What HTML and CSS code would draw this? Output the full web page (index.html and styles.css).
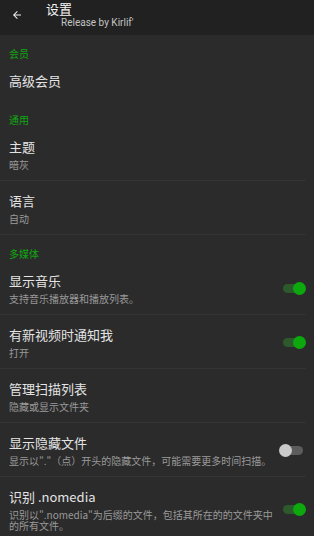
FILE: index.html
```html
<!DOCTYPE html>
<html lang="zh">
<head>
  <meta charset="UTF-8" />
  <meta name="viewport" content="width=device-width, initial-scale=1" />
  <title>设置</title>
  <link rel="stylesheet" href="styles.css">
</head>
<body>
  <div class="appbar">
    <div class="back">
      <svg width="12" height="12" viewBox="0 0 24 24"><path d="M20 11H7.83l5.59-5.59L12 4l-8 8 8 8 1.41-1.41L7.83 13H20v-2z" fill="#f2f2f2"/></svg>
    </div>
    <div class="titles">
      <div class="title">设置</div>
      <div class="subtitle">Release by Kirlif'</div>
    </div>
  </div>

  <div class="section">会员</div>
  <div class="row single">
    <div class="text"><div class="label">高级会员</div></div>
  </div>

  <div class="section">通用</div>
  <div class="row line">
    <div class="text">
      <div class="label">主题</div>
      <div class="sub">暗灰</div>
    </div>
  </div>
  <div class="row line">
    <div class="text">
      <div class="label">语言</div>
      <div class="sub">自动</div>
    </div>
  </div>

  <div class="section">多媒体</div>
  <div class="row line">
    <div class="text">
      <div class="label">显示音乐</div>
      <div class="sub">支持音乐播放器和播放列表。</div>
    </div>
    <div class="toggle on"></div>
  </div>
  <div class="row line">
    <div class="text">
      <div class="label">有新视频时通知我</div>
      <div class="sub">打开</div>
    </div>
    <div class="toggle on"></div>
  </div>
  <div class="row line">
    <div class="text">
      <div class="label">管理扫描列表</div>
      <div class="sub">隐藏或显示文件夹</div>
    </div>
  </div>
  <div class="row line">
    <div class="text">
      <div class="label">显示隐藏文件</div>
      <div class="sub">显示以"."（点）开头的隐藏文件，可能需要更多时间扫描。</div>
    </div>
    <div class="toggle"></div>
  </div>
  <div class="row">
    <div class="text">
      <div class="label">识别 .nomedia</div>
      <div class="sub">识别以".nomedia"为后缀的文件，包括其所在的的文件夹中的所有文件。</div>
    </div>
    <div class="toggle on"></div>
  </div>
</body>
</html>
```

FILE: styles.css
```css
body {
  margin: 0;
  background: #2b2b2b;
  font-family: "Noto Sans CJK SC", Roboto, sans-serif;
  color: #e6e6e6;
  overflow: hidden;
}
.appbar {
  height: 35px;
  background: #212121;
  display: flex;
  box-sizing: border-box;
  padding-top: 1px;
}
.back {
  width: 46px;
  display: flex;
  justify-content: center;
  padding-top: 8px;
  padding-right: 12px;
  box-sizing: border-box;
}
.title {
  font-size: 13px;
  line-height: 16px;
  color: #f4f4f4;
}
.subtitle {
  font-family: Roboto, sans-serif;
  font-size: 10px;
  line-height: 12px;
  margin-left: 15px;
  color: #c4c4c4;
}
.section {
  padding: 12px 9px 1px;
  font-size: 10px;
  line-height: 13px;
  color: #0fa80f;
}
.row {
  display: flex;
  align-items: center;
  padding: 11px 0 10px 9px;
  margin-right: 8px;
}
.row.single {
  padding-bottom: 12px;
}
.row.line {
  border-bottom: 1px solid #343434;
}
.text {
  flex: 1;
  padding-right: 5px;
}
.label {
  font-size: 13px;
  line-height: 17px;
  color: #e4e4e4;
}
.sub {
  font-size: 10px;
  line-height: 11px;
  margin-top: 4px;
  color: #9a9a9a;
}
.toggle {
  position: relative;
  flex: none;
  width: 20px;
  height: 9px;
  border-radius: 5px;
  background: #5c5c5c;
  margin-right: 3px;
}
.toggle::after {
  content: "";
  position: absolute;
  top: -2px;
  left: -4px;
  width: 13px;
  height: 13px;
  border-radius: 50%;
  background: #cacaca;
}
.toggle.on {
  background: #2d5a2d;
}
.toggle.on::after {
  left: auto;
  right: -3px;
  background: #0da80d;
}
```
